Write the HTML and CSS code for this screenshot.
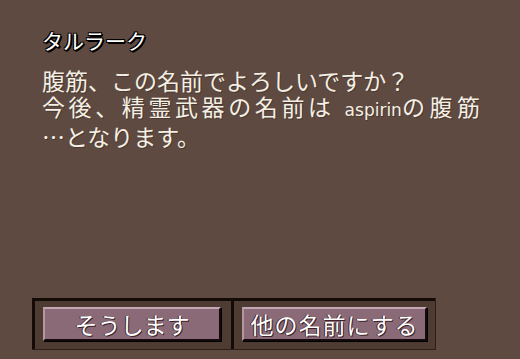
FILE: index.html
```html
<!DOCTYPE html>
<html lang="ja">
<head>
    <meta charset="UTF-8">
    <title>タルラーク</title>
    <link rel="stylesheet" href="styles.css">
</head>
<body>
    <div class="dialog">
        <div class="message">
            <div class="speaker">タルラーク</div>
            <p class="line">腹筋、この名前でよろしいですか？</p>
            <p class="line wide">今後、精霊武器の名前は<span class="latin">aspirin</span><span class="name">の腹筋</span></p>
            <p class="line">…となります。</p>
        </div>

        <div class="choices">
            <div class="cell first">
                <button class="choice">そうします</button>
            </div>
            <div class="cell second">
                <button class="choice">他の名前にする</button>
            </div>
        </div>
    </div>
</body>
</html>
```

FILE: styles.css
```css
body {
    margin: 0;
    background-color: #5e4a40;
    font-family: "Noto Sans CJK JP", "DejaVu Sans", sans-serif;
}

.dialog {
    width: 520px;
    height: 359px;
    display: flex;
    flex-direction: column;
    justify-content: space-between;
    box-sizing: border-box;
    padding: 27px 0 9px 42px;
}

.speaker {
    font-size: 21px;
    line-height: 26px;
    color: #ffffff;
    text-shadow: -1px -1px 0 #000, 1px -1px 0 #000, -1px 1px 0 #000, 1px 1px 0 #000,
        2px 1px 0 #000, 1px 2px 0 #000;
    margin-bottom: 14px;
}

.message .line {
    margin: 0;
    font-size: 23px;
    line-height: 26px;
    color: #f4efe4;
    text-shadow: 1px 1px 0 #4a3830;
    white-space: nowrap;
}

.message .line.wide {
    letter-spacing: 3.6px;
}

.line .latin {
    font-family: "DejaVu Sans", sans-serif;
    font-size: 17px;
    letter-spacing: 0;
    margin-left: 10px;
}

.line .name {
    letter-spacing: 4.5px;
}

.choices {
    display: flex;
    width: 403px;
    margin-left: -10px;
    border-bottom: 1px solid #2e2019;
    border-right: 1px solid #2e2019;
}

.cell {
    background-color: #4e3c33;
    border-top: 3px solid #140a08;
    border-left: 3px solid #140a08;
    padding: 6px 0 8px 8px;
}

.cell.first {
    width: 188px;
}

.cell.second {
    flex: 1;
    padding-right: 8px;
}

.choice {
    width: 100%;
    height: 34px;
    font-family: inherit;
    font-size: 23px;
    line-height: 28px;
    padding: 0;
    color: #ffffff;
    background-color: #8b6a77;
    border: 2px solid;
    border-color: #c4a6b4 #150a0e #150a0e #b497a3;
    box-shadow: 1px 1px 0 #000;
    text-shadow: 1px 1px 0 #3a2228, -1px 0 0 #3a2228;
    cursor: pointer;
}

.cell.first .choice {
    width: 178px;
}

.cell.second .choice {
    letter-spacing: 1px;
}
```
